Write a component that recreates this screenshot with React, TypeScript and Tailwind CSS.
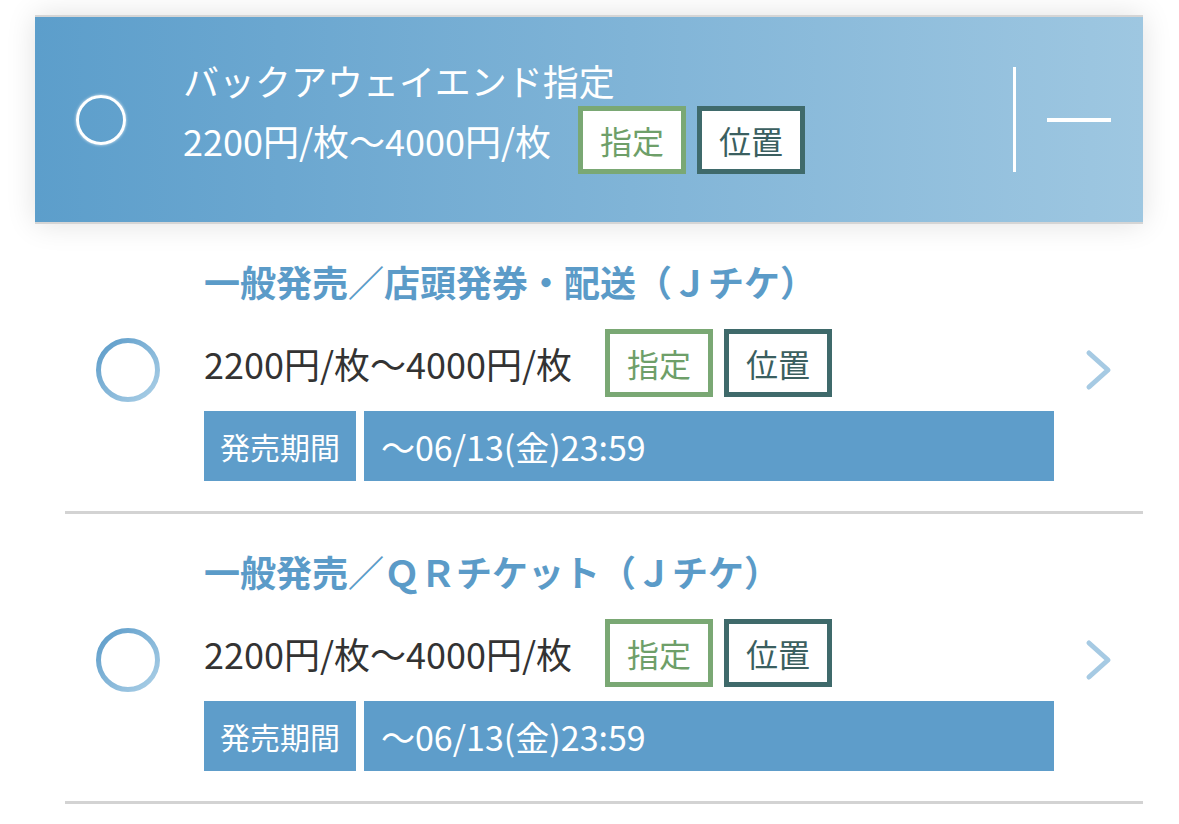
import React from "react";

const FONT = { fontFamily: '"Noto Sans CJK JP", "Noto Sans", sans-serif' };

type Row = {
  title: string;
  price: string;
  period: string;
};

const rows: Row[] = [
  {
    title: "一般発売／店頭発券・配送（Ｊチケ）",
    price: "2200円/枚〜4000円/枚",
    period: "〜06/13(金)23:59",
  },
  {
    title: "一般発売／ＱＲチケット（Ｊチケ）",
    price: "2200円/枚〜4000円/枚",
    period: "〜06/13(金)23:59",
  },
];

function Badges() {
  return (
    <div className="flex gap-[11px]">
      <div className="flex h-[68px] w-[108px] items-center justify-center border-[5px] border-[#7aa874] bg-white text-[32px] text-[#6e9f69]">
        指定
      </div>
      <div className="flex h-[68px] w-[108px] items-center justify-center border-[5px] border-[#3f6a6b] bg-white text-[32px] text-[#3b5f60]">
        位置
      </div>
    </div>
  );
}

function RingIcon() {
  return (
    <svg width="66" height="66" viewBox="0 0 66 66">
      <defs>
        <linearGradient id="ring" x1="0" y1="0" x2="1" y2="1">
          <stop offset="0" stopColor="#5b9bc9" />
          <stop offset="1" stopColor="#acd0e7" />
        </linearGradient>
      </defs>
      <circle cx="33" cy="33" r="29.5" fill="none" stroke="url(#ring)" strokeWidth="5" />
    </svg>
  );
}

function Chevron() {
  return (
    <svg width="28" height="42" viewBox="0 0 28 42">
      <polyline
        points="4,4 23,21 4,38"
        fill="none"
        stroke="#a6cae3"
        strokeWidth="5"
        strokeLinecap="round"
        strokeLinejoin="round"
      />
    </svg>
  );
}

export default function App() {
  return (
    <div className="min-h-[824px] w-full bg-white pt-[15px]" style={FONT}>
      {/* selected header */}
      <div className="ml-[35px] flex h-[209px] w-[1108px] items-center border-y-2 border-[#d5d5d5] bg-gradient-to-r from-[#5c9ecb] to-[#9ec7e1] shadow-[0_0_28px_rgba(0,0,0,0.12)]">
        <div className="ml-[41px] h-[50px] w-[50px] shrink-0 rounded-full border-[3px] border-white shadow-[0_0_3px_rgba(255,255,255,0.8)]" />
        <div className="ml-[57px] flex flex-col pb-[8px] text-white">
          <div className="text-[36px] leading-[44px]">バックアウェイエンド指定</div>
          <div className="mt-[4px] flex items-center">
            <span className="text-[36px] leading-[44px]">2200円/枚〜4000円/枚</span>
            <div className="ml-[27px]">
              <Badges />
            </div>
          </div>
        </div>
        <div className="ml-auto mr-[32px] flex items-center">
          <div className="h-[105px] w-[3px] bg-white" />
          <div className="ml-[31px] h-[4px] w-[64px] bg-white" />
        </div>
      </div>

      {/* options */}
      <div className="ml-[65px] w-[1078px]">
        {rows.map((row) => (
          <div
            key={row.title}
            className="flex items-center border-b-[3px] border-[#d3d3d3] pb-[30px] pl-[30px] pt-[35px]"
          >
            <RingIcon />
            <div className="ml-[43px] flex w-[850px] flex-col">
              <div className="text-[36px] font-bold leading-[44px] text-[#5b9bc8]">{row.title}</div>
              <div className="mt-[26px] flex h-[67px] items-center">
                <span className="text-[36px] leading-[44px] text-[#333333]">{row.price}</span>
                <div className="ml-[33px]">
                  <Badges />
                </div>
              </div>
              <div className="mt-[15px] flex h-[70px] gap-[8px] text-white">
                <div className="flex w-[152px] items-center justify-center bg-[#5e9dca] text-[30px]">
                  発売期間
                </div>
                <div className="flex flex-1 items-center bg-[#5e9dca] pl-[17px] text-[34px]">
                  {row.period}
                </div>
              </div>
            </div>
            <div className="ml-auto mr-[30px] flex">
              <Chevron />
            </div>
          </div>
        ))}
      </div>
    </div>
  );
}
